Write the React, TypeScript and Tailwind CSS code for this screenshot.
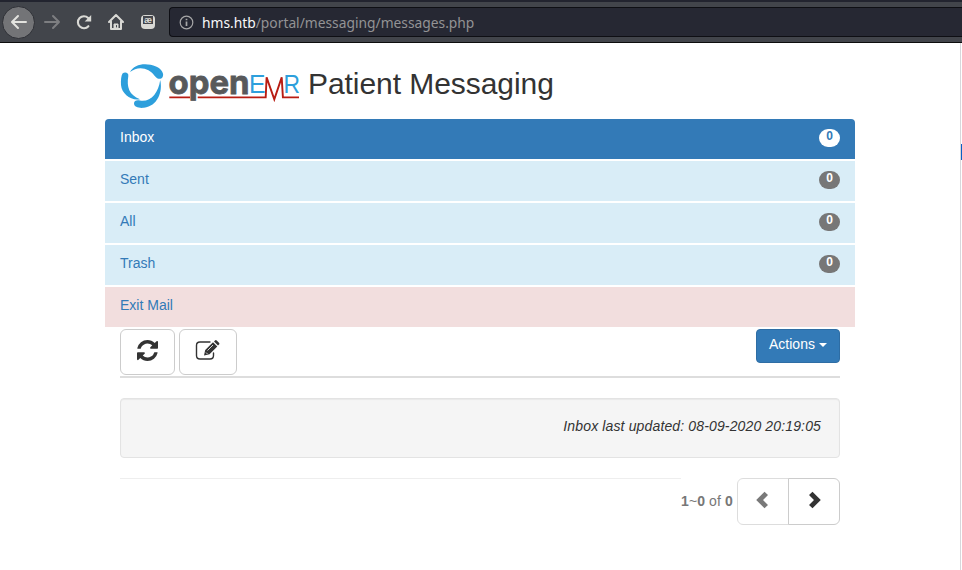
import type { ReactNode } from "react";

const folders = [
  { name: "Inbox", count: 0, style: "rounded-t bg-[#337ab7] text-white", badge: "bg-white text-[#337ab7]" },
  { name: "Sent", count: 0, style: "bg-[#d9edf7] text-[#337ab7]", badge: "bg-[#777] text-white" },
  { name: "All", count: 0, style: "bg-[#d9edf7] text-[#337ab7]", badge: "bg-[#777] text-white" },
  { name: "Trash", count: 0, style: "bg-[#d9edf7] text-[#337ab7]", badge: "bg-[#777] text-white" },
  { name: "Exit Mail", count: null, style: "bg-[#f2dede] text-[#337ab7]", badge: "" },
];

function BrowserBar() {
  return (
    <header className="flex h-[43px] items-center border-t-2 border-b border-t-[#22242f] border-b-[#0c0c0d] bg-[#42454b] pl-[2px]">
      <div className="flex size-[33px] shrink-0 items-center justify-center rounded-full border border-[#2e3036] bg-[#737477] text-[#e3e3df]">
        <svg width="18" height="18" viewBox="0 0 18 18" fill="none" stroke="currentColor" strokeWidth="2" strokeLinecap="round" strokeLinejoin="round">
          <path d="M16 9H2.5M8 3L2 9l6 6" />
        </svg>
      </div>
      <svg className="ml-2 shrink-0 text-[#7d7e81]" width="18" height="18" viewBox="0 0 18 18" fill="none" stroke="currentColor" strokeWidth="2" strokeLinecap="round" strokeLinejoin="round">
        <path d="M2 9h14M10 3l6 6-6 6" />
      </svg>
      <svg className="ml-[14px] shrink-0 text-[#d9d9d5]" width="18" height="18" viewBox="0 0 18 18" fill="none" stroke="currentColor" strokeWidth="2.1" strokeLinecap="round">
        <path d="M13.4 13.2A6 6 0 1 1 13.200 5" />
        <path d="M16.200 2v6.500H9.700z" fill="currentColor" stroke="none" />
      </svg>
      <svg className="ml-[14px] shrink-0 text-[#d9d9d5]" width="18" height="18" viewBox="0 0 18 18" fill="none" stroke="currentColor" strokeWidth="2" strokeLinecap="round" strokeLinejoin="round">
        <path d="M2 9l7-7 7 7M4 8.500v7.500h10V8.500" />
        <path d="M7 16v-5h4v5z" fill="currentColor" strokeWidth="1" />
        <path d="M9.500 12.500v1.500" stroke="#42454b" strokeWidth="1" />
      </svg>
      <div className="ml-[16px] flex h-[14px] w-[14px] shrink-0 justify-center rounded-sm bg-[#d9d9d5] pt-px">
        <span className="flex h-[8px] w-[10px] items-center justify-center bg-[#44464c] font-['Liberation_Sans',sans-serif] text-[9px] leading-none font-bold text-[#d9d9d5]">æ</span>
      </div>
      <div className="ml-[14px] flex h-[30px] flex-1 items-center rounded-l border border-r-0 border-[#0e0f14] bg-[#262833] pl-[9px]">
        <svg className="shrink-0 text-[#a7a7a8]" width="15" height="15" viewBox="0 0 15 15" fill="none" stroke="currentColor">
          <circle cx="7.500" cy="7.500" r="6.300" strokeWidth="1.200" />
          <path d="M7.500 6.500v4.500M7.500 3.700v1.600" strokeWidth="1.700" />
        </svg>
        <span className="ml-2 pt-0.5 font-['Noto_Sans',sans-serif] text-[13.8px] leading-5 whitespace-nowrap text-[#939395]">
          <span className="text-[#f9f9fa]">hms.htb</span>/portal/messaging/messages.php
        </span>
      </div>
    </header>
  );
}

function Logo() {
  return (
    <svg className="mt-5 shrink-0 overflow-visible" width="181" height="47" viewBox="0 0 181 47">
      <g fill="#2d9fdc">
        <path d="M10 9C14 1 26-1 36 3.500c6 2.700 8.500 7.500 6.500 10.800-1.800 2.700-5.500 1.600-7.500-1.100C29 4.500 18 2.500 10 9z" />
        <path d="M2.500 10.500c2.500-2.200 6.500-.7 5.800 2.500C6.500 24 9 32 20 36.200 11 38 1.800 31 1 22c-.3-5 .2-9.500 1.500-11.500z" />
        <path d="M40.200 17C43 29 37.500 43 24 44.800c-5 .6-10-.8-10-4.200 0-3 3-3.800 6-3C30.500 39.500 38.500 30 40.200 17z" />
      </g>
      <text x="48.600" y="30.700" textLength="81" lengthAdjust="spacingAndGlyphs" fill="#58595b" stroke="#58595b" strokeWidth=".8" className="font-['Inter',sans-serif] text-[33px] font-bold">open</text>
      <text x="129" y="30.300" fill="#2d9fdc" className="font-['Liberation_Sans',sans-serif] text-[25px]" textLength="16.500" lengthAdjust="spacingAndGlyphs">E</text>
      <text x="163.500" y="30.300" fill="#2d9fdc" className="font-['Liberation_Sans',sans-serif] text-[25px]" textLength="16.500" lengthAdjust="spacingAndGlyphs">R</text>
      <path d="M49.300 34.400H70M77.700 34.400h68l.9-20 7.700 22 7.400-22 1.200 20H179" fill="none" stroke="#b81d13" strokeWidth="1.900" />
    </svg>
  );
}

function IconButton({ label, className, children }: { label: string; className: string; children: ReactNode }) {
  return (
    <button aria-label={label} className={`flex items-center justify-center border border-[#ccc] bg-white text-[#333] ${className}`}>
      {children}
    </button>
  );
}

export default function App() {
  return (
    <div className="flex h-[570px] flex-col overflow-hidden bg-white font-['Liberation_Sans',sans-serif] text-sm leading-5 text-[#333]">
      <BrowserBar />
      <div className="flex min-h-0 flex-1 justify-between">
        <main className="ml-[105px] w-[750px]">
          <div className="flex h-[76px] pl-[15px]">
            <Logo />
            <h1 className="mt-[24px] ml-[7px] text-[30px] leading-[33px] tracking-[-0.06px] whitespace-nowrap">Patient Messaging</h1>
          </div>

          <nav className="flex flex-col gap-0.5">
            {folders.map((folder) => (
              <a key={folder.name} className={`flex h-10 justify-between px-[15px] pt-2 ${folder.style}`}>
                {folder.name}
                {folder.count !== null && (
                  <span className={`mt-0.5 flex h-[18px] w-[21px] justify-center rounded-[10px] pt-px text-xs leading-[12px] font-bold ${folder.badge}`}>{folder.count}</span>
                )}
              </a>
            ))}
          </nav>

          <div className="px-[15px] pt-0.5">
            <div className="flex h-[49px] border-b-2 border-[#ddd]">
              <IconButton label="Refresh" className="h-[46px] w-[55px] rounded-md">
                <svg width="21" height="21" viewBox="0 0 1536 1536" className="-mt-[3px]" fill="currentColor">
                  <path d="M1511 928q0 5-1 7-64 268-268 434.500t-478 166.500q-146 0-282.500-55T238 1324l-129 129q-19 19-45 19t-45-19-19-45V960q0-26 19-45t45-19h448q26 0 45 19t19 45-19 45l-137 137q71 66 161 102t187 36q134 0 250-65t186-179q11-17 53-117 8-23 30-23h192q13 0 22.500 9.500t9.500 22.500zM1536 128v448q0 26-19 45t-45 19h-448q-26 0-45-19t-19-45 19-45l138-138Q969 256 768 256q-134 0-250 65T332 500q-11 17-53 117-8 23-30 23H50q-13 0-22.500-9.500T18 608v-7q65-268 270-434.500T768 0q146 0 284 55.500T1297 212l130-129q19-19 45-19t45 19 19 45z" />
                </svg>
              </IconButton>
              <IconButton label="Compose" className="ml-1 h-[46px] w-[58px] rounded-md">
                <svg width="26" height="21" viewBox="0 0 26 21" className="-mt-[3px] -ml-[2px]" fill="none">
                  <path d="M16 2H6Q2.500 2 2.500 5.500v10Q2.500 19 6 19h10q3.500 0 3.500-3.500V13" stroke="currentColor" strokeWidth="1.400" strokeLinecap="round" />
                  <path d="M10 15.500l1.200-5.500L19 2.200l4.300 4.300-7.800 7.800zM20 1.500l1-1q.8-.8 1.700 0L25 2.800q.8.800 0 1.700l-1 1z" fill="currentColor" />
                  <path d="M13.500 10.500l5.500-5.500M12 12.500l1.500 1.500" stroke="white" strokeWidth=".8" />
                </svg>
              </IconButton>
              <button className="ml-auto flex h-[34px] w-[84px] justify-center gap-1 rounded border border-[#2e6da4] bg-[#337ab7] pt-1 text-white">
                Actions
                <span className="mt-[9px] size-0 border-x-4 border-t-4 border-x-transparent" />
              </button>
            </div>

            <section className="mt-5 h-[60px] rounded border border-[#e3e3e3] bg-[#f5f5f5] pt-[17px] pr-[18px] text-right tracking-[0.14px] italic shadow-[inset_0_1px_1px_rgba(0,0,0,0.05)]">
              Inbox last updated: 08-09-2020 20:19:05
            </section>

            <div className="mt-5 flex">
              <hr className="w-[561px] border-[#eee]" />
              <span className="pt-[13px] tracking-[0.1px] whitespace-nowrap text-[#777]"><b>1</b>~<b>0</b> of <b>0</b></span>
              <div className="ml-auto flex">
                <IconButton label="Previous page" className="h-[47px] w-[52px] rounded-l-md opacity-65">
                  <svg width="14" height="18" viewBox="0 0 14 18" className="-mt-[3px] -ml-[3px]" fill="currentColor"><path d="M13 4L9.500.7 1.200 9l8.300 8.300L13 14 8 9z" /></svg>
                </IconButton>
                <IconButton label="Next page" className="-ml-px h-[47px] w-[52px] rounded-r-md">
                  <svg width="14" height="18" viewBox="0 0 14 18" className="-mt-[3px] ml-px" fill="currentColor"><path d="M1 4L4.500.7 12.800 9l-8.300 8.300L1 14l5-5z" /></svg>
                </IconButton>
              </div>
            </div>
          </div>
        </main>
        <aside className="w-0.5 border-l border-[#d7d7db] pt-[101px]"><div className="h-4 bg-[#0a60c5]" /></aside>
      </div>
    </div>
  );
}
